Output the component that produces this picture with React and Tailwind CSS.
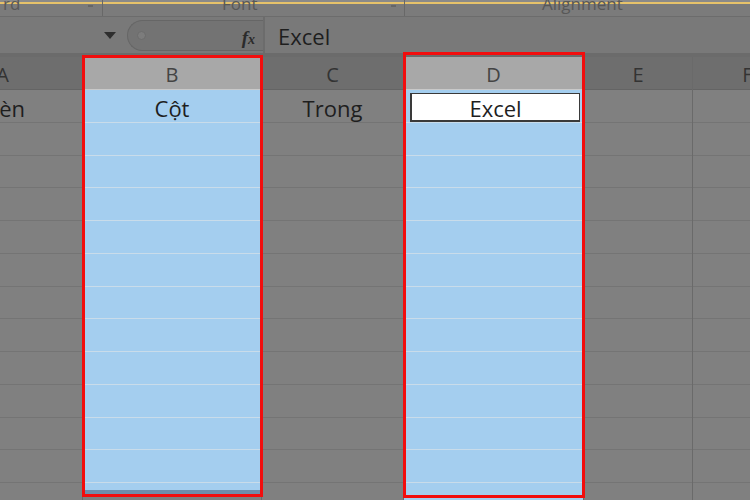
import React from "react";

const ROWS = 13;
const font = { fontFamily: "'Open Sans', Lato, 'Noto Sans', sans-serif" };

function Column({ width, ml, label, selected, cells, bottomBand, borderR = true }) {
  return (
    <div
      className={`flex flex-col shrink-0 ${ml || ""} ${borderR ? "border-r border-[#6a6a6a]" : ""}`}
      style={{ width }}
    >
      <div
        className={`h-[33px] pt-[4px] flex items-center justify-center text-[20px] border-b ${
          selected ? "bg-[#a8a8a8] text-[#444] border-[#c9c9c9]" : "bg-[#6e6e6e] text-[#333] border-[#646464]"
        }`}
      >
        {label}
      </div>
      {cells.map((c, i) =>
        c.active ? (
          <div key={i} className="h-[32.75px] shrink-0 bg-[#a4ceef] pt-[3px] pl-[6px] pr-[3px] border-b border-[#c9dcea]">
            <div className="h-[29px] pt-[2px] bg-white border border-[#3a3a3a] border-l-2 border-b-2 flex items-center justify-center text-[22px] font-medium text-[#1e1e1e]">
              {c.text}
            </div>
          </div>
        ) : (
          <div
            key={i}
            className={`h-[32.75px] pt-[5px] shrink-0 flex items-center justify-center text-[22px] font-medium text-[#1e1e1e] border-b ${
              selected ? "bg-[#a4ceef] border-[#c9dcea]" : "bg-[#808080] border-[#747474]"
            } ${c.shift ? "pr-[8px]" : ""}`}
          >
            {c.text}
          </div>
        )
      )}
      {bottomBand && (
        <>
          <div className="h-[7px] shrink-0 bg-[#a4ceef]" />
          <div className="h-[5px] shrink-0 bg-[#6f8daa]" />
        </>
      )}
    </div>
  );
}

function mk(first, n = ROWS) {
  return Array.from({ length: n }, (_, i) => (i === 0 ? first : { text: "" }));
}

export default function App() {
  return (
    <div className="w-[750px] h-[500px] overflow-hidden bg-[#7f7f7f] relative flex flex-col" style={font}>
      {/* ribbon strip */}
      <div className="h-[17px] shrink-0 bg-[#7b7b7b] relative border-b border-[#6c6c6c] overflow-hidden">
        <div className="absolute top-0 left-0 right-0 h-[1.5px] bg-[#8a8a8a]" />
        <div className="absolute top-[1.5px] left-0 right-0 h-[2.5px] bg-[#e6c26a]" />
        <div className="flex w-full h-full text-[17px] leading-none text-[#585858]">
          <div className="w-[103px] h-full border-r border-[#686868] relative overflow-hidden">
            <span className="absolute left-[3px] top-[-5px]">rd</span>
            <span className="absolute left-[88px] top-[5px] w-[5px] h-[2px] bg-[#666]" />
          </div>
          <div className="w-[302px] h-full border-r border-[#686868] relative overflow-hidden">
            <span className="absolute left-[119px] top-[-5px]">Font</span>
            <span className="absolute left-[288px] top-[5px] w-[5px] h-[2px] bg-[#666]" />
          </div>
          <div className="flex-1 h-full relative overflow-hidden">
            <span className="absolute left-[137px] top-[-5px]">Alignment</span>
          </div>
        </div>
      </div>

      {/* formula bar */}
      <div className="h-[40px] shrink-0 bg-[#797979] flex items-center border-b-4 border-[#6b6b6b]">
        <div className="w-[127px] h-full flex items-center justify-end pr-[11px]">
          <svg width="12" height="7" viewBox="0 0 12 7">
            <path d="M0 0 L12 0 L6 7 Z" fill="#2e2e2e" />
          </svg>
        </div>
        <div className="w-[136px] h-[31px] rounded-l-full border border-r-0 border-[#666] bg-[#737373] flex items-center relative">
          <div className="ml-[9px] w-[9px] h-[9px] rounded-full bg-[#7c7c7c] border border-[#6c6c6c]" />
          <span
            className="absolute right-[8px] top-[3px] text-[19px] italic font-bold text-[#2b2b2b]"
            style={{ fontFamily: "'Liberation Serif', serif" }}
          >
            f<span className="text-[14px]">x</span>
          </span>
        </div>
        <div className="w-[2px] h-full bg-[#6c6c6c]" />
        <div className="flex-1 h-full flex items-center pl-[13px] pt-[2px] text-[22px] font-medium text-[#1e1e1e]">Excel</div>
      </div>

      {/* grid */}
      <div className="flex-1 flex overflow-hidden">
        <Column width={160} ml="-ml-[77px]" label="A" cells={mk({ text: "Chèn", shift: true })} />
        <Column width={179} label="B" selected cells={mk({ text: "Cột" }, 12)} bottomBand />
        <Column width={142} label="C" cells={mk({ text: "Trong" })} />
        <Column width={180} label="D" selected cells={mk({ text: "Excel", active: true })} />
        <Column width={109} label="E" cells={mk({ text: "" })} />
        <Column width={109} label="F" borderR={false} cells={mk({ text: "" })} />
      </div>

      {/* annotation boxes */}
      <div className="absolute left-[82px] top-[55px] w-[181px] h-[442px] border-[3px] border-[#f20d0d] pointer-events-none" />
      <div className="absolute left-[403px] top-[52px] w-[182px] h-[446px] border-[3px] border-[#f20d0d] pointer-events-none" />
    </div>
  );
}
